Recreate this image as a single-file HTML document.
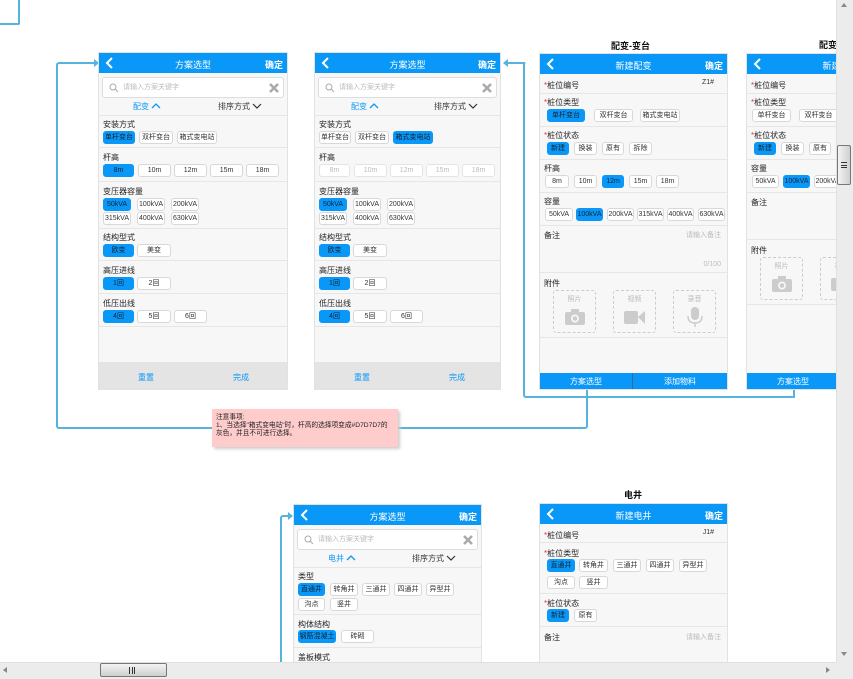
<!DOCTYPE html>
<html style="overflow:hidden;width:853px;height:679px"><head><meta charset="utf-8">
<style>
*{box-sizing:border-box;margin:0;padding:0}
body{width:853px;height:679px;overflow:hidden;background:#fff;position:relative;font-family:"Liberation Sans","Noto Sans CJK SC",sans-serif;font-size:8px;color:#333}
.a{position:absolute}
.p{position:absolute;background:#f7f7f7;border:1px solid #e2e2e2;overflow:hidden}
.hd{position:absolute;left:0;top:0;right:0;height:20px;background:#0a98f8;color:#fff}
.hd .t{position:absolute;left:0;right:0;top:5px;text-align:center;font-size:9px}
.hd .ok{position:absolute;right:4px;top:5px;font-size:9px;font-weight:bold}
.hd svg{position:absolute;left:6px;top:3px}
.l{position:absolute;left:4px;font-size:8px;color:#222}
.ln{position:absolute;left:0;right:0;height:1px;background:#e6e6e6}
.b{position:absolute;height:13px;border:1px solid #d8d8d8;border-radius:3px;background:#fff;font-size:7px;line-height:11px;text-align:center;color:#333;white-space:nowrap}
.on{background:#0a98f8;border-color:#0a98f8;color:#123}
.dis{color:#bbb;border-color:#e4e4e4}
.sr{position:absolute;left:3px;right:3px;height:21px;background:#fff;border:1px solid #ddd;border-radius:3px;color:#bbb;font-size:7px;line-height:19px;padding-left:20px}
.tab{position:absolute;font-size:8px}
.red{color:#e33}
.ttl{position:absolute;font-size:9px;font-weight:bold;color:#111}
.box{position:absolute;width:43px;height:43px;border:1px dashed #ccc;border-radius:3px;text-align:center;color:#bbb;font-size:7px;padding-top:3px}
.cn{position:absolute;border-color:#55b4dd;border-style:solid;border-width:0}
</style></head><body>

<div class="cn" style="left:0;top:0;width:20px;height:25px;border-right-width:2px;border-bottom-width:2px;border-bottom-right-radius:2px"></div>

<!-- connectors -->
<div class="cn" style="left:56px;top:62px;width:38px;height:20px;border-left-width:2px;border-top-width:2px;border-radius:3px 0 0 0"></div>
<div class="cn" style="left:56px;top:80px;width:156px;height:349px;border-left-width:2px;border-bottom-width:2px;border-radius:0 0 0 3px"></div>
<div class="a" style="left:94px;top:59px;width:0;height:0;border-left:5px solid #55b4dd;border-top:4px solid transparent;border-bottom:4px solid transparent"></div>
<div class="cn" style="left:398px;top:389px;width:190px;height:40px;border-right-width:2px;border-bottom-width:2px;border-radius:0 0 3px 0"></div>
<div class="cn" style="left:523px;top:62px;width:272px;height:336px;border-left-width:2px;border-bottom-width:2px;border-radius:3px 0 3px 3px"></div>
<div class="cn" style="left:508px;top:62px;width:17px;height:2px;border-top-width:2px"></div>
<div class="a" style="left:503px;top:59px;width:0;height:0;border-right:5px solid #55b4dd;border-top:4px solid transparent;border-bottom:4px solid transparent"></div>
<div class="cn" style="left:793px;top:389px;width:2px;height:9px;border-left-width:2px"></div>
<div class="cn" style="left:280px;top:515px;width:10px;height:147px;border-left-width:2px;border-top-width:2px;border-radius:3px 0 0 0"></div>
<div class="a" style="left:288px;top:512px;width:0;height:0;border-left:5px solid #55b4dd;border-top:4px solid transparent;border-bottom:4px solid transparent"></div>

<!-- note -->
<div class="a" style="left:212px;top:409px;width:186px;height:38px;background:#ffcccc;box-shadow:2px 2px 3px #ccc;font-size:6.7px;line-height:8px;color:#222;padding:5px 4px">注意事项:<br>1、当选择"箱式变电站"时，杆高的选择项变成#D7D7D7的灰色，并且不可进行选择。</div>

<!-- PANEL 1 -->
<div class="p" style="left:98px;top:52px;width:190px;height:338px">
 <div class="hd"><svg width="10" height="14"><polyline points="7,2 2,7 7,12" fill="none" stroke="#fff" stroke-width="2"/></svg><div class="t">方案选型</div><div class="ok">确定</div></div>
 <div class="sr" style="top:24px">请输入方案关键字<svg class="a" style="left:6px;top:5px" width="10" height="10"><circle cx="4" cy="4" r="3" fill="none" stroke="#aaa"/><line x1="6" y1="6" x2="9" y2="9" stroke="#aaa"/></svg><svg class="a" style="right:4px;top:5px" width="10" height="10"><path d="M1 1L9 9M9 1L1 9" stroke="#aaa" stroke-width="2.5"/></svg></div>
 <div class="tab" style="left:34px;top:48px;color:#0a98f8">配变 <svg width="10" height="6"><polyline points="1,5 5,1 9,5" fill="none" stroke="#0a98f8" stroke-width="1.3"/></svg></div>
 <div class="tab" style="left:119px;top:48px">排序方式 <svg width="10" height="6"><polyline points="1,1 5,5 9,1" fill="none" stroke="#333" stroke-width="1.2"/></svg></div>
 <div class="ln" style="top:62px"></div>
 <div class="l" style="top:66px">安装方式</div>
 <span class="b on" style="left:4px;top:78px;width:32px">单杆变台</span><span class="b" style="left:40px;top:78px;width:34px">双杆变台</span><span class="b" style="left:78px;top:78px;width:40px">箱式变电站</span>
 <div class="ln" style="top:94px"></div>
 <div class="l" style="top:99px">杆高</div>
 <span class="b on" style="left:4px;top:111px;width:31px">8m</span><span class="b" style="left:39px;top:111px;width:33px">10m</span><span class="b" style="left:75px;top:111px;width:33px">12m</span><span class="b" style="left:111px;top:111px;width:33px">15m</span><span class="b" style="left:147px;top:111px;width:33px">18m</span>
 <div class="ln" style="top:128px"></div>
 <div class="l" style="top:133px">变压器容量</div>
 <span class="b on" style="left:4px;top:145px;width:28px">50kVA</span><span class="b" style="left:38px;top:145px;width:28px">100kVA</span><span class="b" style="left:72px;top:145px;width:28px">200kVA</span>
 <span class="b" style="left:4px;top:159px;width:28px">315kVA</span><span class="b" style="left:38px;top:159px;width:28px">400kVA</span><span class="b" style="left:72px;top:159px;width:28px">630kVA</span>
 <div class="ln" style="top:175px"></div>
 <div class="l" style="top:179px">结构型式</div>
 <span class="b on" style="left:4px;top:191px;width:31px">欧变</span><span class="b" style="left:38px;top:191px;width:34px">美变</span>
 <div class="ln" style="top:207px"></div>
 <div class="l" style="top:212px">高压进线</div>
 <span class="b on" style="left:4px;top:224px;width:31px">1回</span><span class="b" style="left:38px;top:224px;width:34px">2回</span>
 <div class="ln" style="top:240px"></div>
 <div class="l" style="top:245px">低压出线</div>
 <span class="b on" style="left:4px;top:257px;width:31px">4回</span><span class="b" style="left:38px;top:257px;width:34px">5回</span><span class="b" style="left:75px;top:257px;width:33px">6回</span>
 <div class="ln" style="top:273px"></div>
 <div class="a" style="left:0;right:0;top:309px;height:28px;background:#e4e4e4;color:#0a98f8;font-size:8px"><span class="a" style="left:39px;top:10px">重置</span><span class="a" style="left:134px;top:10px">完成</span></div>
</div>

<!-- PANEL 2 -->
<div class="p" style="left:314px;top:52px;width:187px;height:338px">
 <div class="hd"><svg width="10" height="14"><polyline points="7,2 2,7 7,12" fill="none" stroke="#fff" stroke-width="2"/></svg><div class="t">方案选型</div><div class="ok">确定</div></div>
 <div class="sr" style="top:24px">请输入方案关键字<svg class="a" style="left:6px;top:5px" width="10" height="10"><circle cx="4" cy="4" r="3" fill="none" stroke="#aaa"/><line x1="6" y1="6" x2="9" y2="9" stroke="#aaa"/></svg><svg class="a" style="right:4px;top:5px" width="10" height="10"><path d="M1 1L9 9M9 1L1 9" stroke="#aaa" stroke-width="2.5"/></svg></div>
 <div class="tab" style="left:36px;top:48px;color:#0a98f8">配变 <svg width="10" height="6"><polyline points="1,5 5,1 9,5" fill="none" stroke="#0a98f8" stroke-width="1.3"/></svg></div>
 <div class="tab" style="left:119px;top:48px">排序方式 <svg width="10" height="6"><polyline points="1,1 5,5 9,1" fill="none" stroke="#333" stroke-width="1.2"/></svg></div>
 <div class="ln" style="top:62px"></div>
 <div class="l" style="top:66px">安装方式</div>
 <span class="b" style="left:4px;top:78px;width:32px">单杆变台</span><span class="b" style="left:40px;top:78px;width:34px">双杆变台</span><span class="b on" style="left:78px;top:78px;width:40px">箱式变电站</span>
 <div class="ln" style="top:94px"></div>
 <div class="l" style="top:99px">杆高</div>
 <span class="b dis" style="left:4px;top:111px;width:31px">8m</span><span class="b dis" style="left:39px;top:111px;width:33px">10m</span><span class="b dis" style="left:75px;top:111px;width:33px">12m</span><span class="b dis" style="left:111px;top:111px;width:33px">15m</span><span class="b dis" style="left:147px;top:111px;width:33px">18m</span>
 <div class="ln" style="top:128px"></div>
 <div class="l" style="top:133px">变压器容量</div>
 <span class="b on" style="left:4px;top:145px;width:28px">50kVA</span><span class="b" style="left:38px;top:145px;width:28px">100kVA</span><span class="b" style="left:72px;top:145px;width:28px">200kVA</span>
 <span class="b" style="left:4px;top:159px;width:28px">315kVA</span><span class="b" style="left:38px;top:159px;width:28px">400kVA</span><span class="b" style="left:72px;top:159px;width:28px">630kVA</span>
 <div class="ln" style="top:175px"></div>
 <div class="l" style="top:179px">结构型式</div>
 <span class="b on" style="left:4px;top:191px;width:31px">欧变</span><span class="b" style="left:38px;top:191px;width:34px">美变</span>
 <div class="ln" style="top:207px"></div>
 <div class="l" style="top:212px">高压进线</div>
 <span class="b on" style="left:4px;top:224px;width:31px">1回</span><span class="b" style="left:38px;top:224px;width:34px">2回</span>
 <div class="ln" style="top:240px"></div>
 <div class="l" style="top:245px">低压出线</div>
 <span class="b on" style="left:4px;top:257px;width:31px">4回</span><span class="b" style="left:38px;top:257px;width:34px">5回</span><span class="b" style="left:75px;top:257px;width:33px">6回</span>
 <div class="ln" style="top:273px"></div>
 <div class="a" style="left:0;right:0;top:309px;height:28px;background:#e4e4e4;color:#0a98f8;font-size:8px"><span class="a" style="left:39px;top:10px">重置</span><span class="a" style="left:134px;top:10px">完成</span></div>
</div>

<!-- PANEL 3 -->
<div class="ttl" style="left:611px;top:39px">配变-变台</div>
<div class="p" style="left:539px;top:53px;width:189px;height:337px">
 <div class="hd"><svg width="10" height="14"><polyline points="7,2 2,7 7,12" fill="none" stroke="#fff" stroke-width="2"/></svg><div class="t">新建配变</div><div class="ok">确定</div></div>
 <div class="l" style="top:26px"><span class="red">*</span>桩位编号</div><div class="a" style="right:13px;top:25px;font-size:7px">Z1#</div>
 <div class="ln" style="top:39px"></div>
 <div class="l" style="top:43px"><span class="red">*</span>桩位类型</div>
 <span class="b on" style="left:7px;top:55px;width:38px">单杆变台</span><span class="b" style="left:54px;top:55px;width:39px">双杆变台</span><span class="b" style="left:100px;top:55px;width:40px">箱式变电站</span>
 <div class="ln" style="top:72px"></div>
 <div class="l" style="top:76px"><span class="red">*</span>桩位状态</div>
 <span class="b on" style="left:7px;top:88px;width:22px">新建</span><span class="b" style="left:34px;top:88px;width:23px">换装</span><span class="b" style="left:62px;top:88px;width:22px">原有</span><span class="b" style="left:89px;top:88px;width:23px">拆除</span>
 <div class="ln" style="top:105px"></div>
 <div class="l" style="top:109px">杆高</div>
 <span class="b" style="left:5px;top:121px;width:24px">8m</span><span class="b" style="left:34px;top:121px;width:23px">10m</span><span class="b on" style="left:62px;top:121px;width:22px">12m</span><span class="b" style="left:89px;top:121px;width:23px">15m</span><span class="b" style="left:116px;top:121px;width:23px">18m</span>
 <div class="ln" style="top:138px"></div>
 <div class="l" style="top:142px">容量</div>
 <span class="b" style="left:5px;top:154px;width:28px">50kVA</span><span class="b on" style="left:36px;top:154px;width:27px">100kVA</span><span class="b" style="left:67px;top:154px;width:27px">200kVA</span><span class="b" style="left:97px;top:154px;width:27px">315kVA</span><span class="b" style="left:127px;top:154px;width:27px">400kVA</span><span class="b" style="left:158px;top:154px;width:27px">630kVA</span>
 <div class="ln" style="top:171px"></div>
 <div class="l" style="top:176px">备注</div><div class="a" style="right:6px;top:176px;color:#bbb;font-size:7px">请输入备注</div>
 <div class="a" style="right:6px;top:207px;color:#bbb;font-size:7px">0/100</div>
 <div class="ln" style="top:218px"></div>
 <div class="l" style="top:224px">附件</div>
 <div class="box" style="left:13px;top:236px">照片<br><svg width="22" height="18" style="margin-top:4px"><rect x="1" y="4" width="20" height="13" rx="2" fill="#ccc"/><rect x="7" y="1" width="8" height="4" fill="#ccc"/><circle cx="11" cy="10.5" r="4" fill="#f7f7f7"/><circle cx="11" cy="10.5" r="2.3" fill="#ccc"/></svg></div>
 <div class="box" style="left:73px;top:236px">视频<br><svg width="22" height="18" style="margin-top:4px"><rect x="0" y="3" width="14" height="13" rx="2" fill="#ccc"/><polygon points="14,9 21,3 21,16" fill="#ccc"/></svg></div>
 <div class="box" style="left:133px;top:236px">录音<br><svg width="22" height="22" style="margin-top:2px"><rect x="7" y="1" width="8" height="13" rx="4" fill="#ccc"/><path d="M4 10Q4 17 11 17Q18 17 18 10" fill="none" stroke="#ccc" stroke-width="1.5"/><line x1="11" y1="17" x2="11" y2="21" stroke="#ccc" stroke-width="1.5"/></svg></div>
 <div class="ln" style="top:283px"></div>
 <div class="a" style="left:0;right:0;top:319px;height:17px;background:#0a98f8;color:#fff;font-size:8px"><span class="a" style="left:30px;top:3px">方案选型</span><span class="a" style="left:92px;top:0;width:1px;height:17px;background:#3a6a90"></span><span class="a" style="left:124px;top:3px">添加物料</span></div>
</div>

<!-- PANEL 4 (clipped) -->
<div class="ttl" style="left:819px;top:38px">配变</div>
<div class="p" style="left:746px;top:53px;width:189px;height:337px">
 <div class="hd"><svg width="10" height="14"><polyline points="7,2 2,7 7,12" fill="none" stroke="#fff" stroke-width="2"/></svg><div class="t">新建配变</div></div>
 <div class="l" style="top:26px"><span class="red">*</span>桩位编号</div>
 <div class="ln" style="top:39px"></div>
 <div class="l" style="top:43px"><span class="red">*</span>桩位类型</div>
 <span class="b" style="left:5px;top:55px;width:39px">单杆变台</span><span class="b" style="left:52px;top:55px;width:39px">双杆变台</span>
 <div class="ln" style="top:72px"></div>
 <div class="l" style="top:76px"><span class="red">*</span>桩位状态</div>
 <span class="b on" style="left:7px;top:88px;width:22px">新建</span><span class="b" style="left:34px;top:88px;width:23px">换装</span><span class="b" style="left:62px;top:88px;width:22px">原有</span>
 <div class="ln" style="top:105px"></div>
 <div class="l" style="top:109px">容量</div>
 <span class="b" style="left:5px;top:121px;width:27px">50kVA</span><span class="b on" style="left:36px;top:121px;width:27px">100kVA</span><span class="b" style="left:67px;top:121px;width:27px">200kVA</span>
 <div class="ln" style="top:138px"></div>
 <div class="l" style="top:143px">备注</div>
 <div class="ln" style="top:185px"></div>
 <div class="l" style="top:191px">附件</div>
 <div class="box" style="left:13px;top:203px">照片<br><svg width="22" height="18" style="margin-top:4px"><rect x="1" y="4" width="20" height="13" rx="2" fill="#ccc"/><rect x="7" y="1" width="8" height="4" fill="#ccc"/><circle cx="11" cy="10.5" r="4" fill="#f7f7f7"/><circle cx="11" cy="10.5" r="2.3" fill="#ccc"/></svg></div>
 <div class="box" style="left:73px;top:203px">视频<br><svg width="22" height="18" style="margin-top:4px"><rect x="0" y="3" width="14" height="13" rx="2" fill="#ccc"/></svg></div>
 <div class="ln" style="top:250px"></div>
 <div class="a" style="left:0;right:0;top:319px;height:17px;background:#0a98f8;color:#fff;font-size:8px"><span class="a" style="left:30px;top:3px">方案选型</span></div>
</div>

<!-- PANEL 5 -->
<div class="p" style="left:293px;top:504px;width:189px;height:160px">
 <div class="hd"><svg width="10" height="14"><polyline points="7,2 2,7 7,12" fill="none" stroke="#fff" stroke-width="2"/></svg><div class="t">方案选型</div><div class="ok">确定</div></div>
 <div class="sr" style="top:24px">请输入方案关键字<svg class="a" style="left:6px;top:5px" width="10" height="10"><circle cx="4" cy="4" r="3" fill="none" stroke="#aaa"/><line x1="6" y1="6" x2="9" y2="9" stroke="#aaa"/></svg><svg class="a" style="right:4px;top:5px" width="10" height="10"><path d="M1 1L9 9M9 1L1 9" stroke="#aaa" stroke-width="2.5"/></svg></div>
 <div class="tab" style="left:34px;top:48px;color:#0a98f8">电井 <svg width="10" height="6"><polyline points="1,5 5,1 9,5" fill="none" stroke="#0a98f8" stroke-width="1.3"/></svg></div>
 <div class="tab" style="left:118px;top:48px">排序方式 <svg width="10" height="6"><polyline points="1,1 5,5 9,1" fill="none" stroke="#333" stroke-width="1.2"/></svg></div>
 <div class="ln" style="top:62px"></div>
 <div class="l" style="top:66px">类型</div>
 <span class="b on" style="left:4px;top:78px;width:27px">直通井</span><span class="b" style="left:36px;top:78px;width:28px">转角井</span><span class="b" style="left:68px;top:78px;width:28px">三通井</span><span class="b" style="left:100px;top:78px;width:28px">四通井</span><span class="b" style="left:132px;top:78px;width:28px">异型井</span>
 <span class="b" style="left:4px;top:93px;width:27px">沟点</span><span class="b" style="left:36px;top:93px;width:28px">竖井</span>
 <div class="ln" style="top:109px"></div>
 <div class="l" style="top:114px">构体结构</div>
 <span class="b on" style="left:4px;top:125px;width:38px">钢筋混凝土</span><span class="b" style="left:47px;top:125px;width:33px">砖砌</span>
 <div class="ln" style="top:142px"></div>
 <div class="l" style="top:147px">盖板模式</div>
</div>

<!-- PANEL 6 -->
<div class="ttl" style="left:624px;top:488px">电井</div>
<div class="p" style="left:539px;top:503px;width:189px;height:161px">
 <div class="hd"><svg width="10" height="14"><polyline points="7,2 2,7 7,12" fill="none" stroke="#fff" stroke-width="2"/></svg><div class="t">新建电井</div><div class="ok">确定</div></div>
 <div class="l" style="top:26px"><span class="red">*</span>桩位编号</div><div class="a" style="right:13px;top:25px;font-size:7px">J1#</div>
 <div class="ln" style="top:38px"></div>
 <div class="l" style="top:44px"><span class="red">*</span>桩位类型</div>
 <span class="b on" style="left:7px;top:55px;width:28px">直通井</span><span class="b" style="left:39px;top:55px;width:29px">转角井</span><span class="b" style="left:73px;top:55px;width:28px">三通井</span><span class="b" style="left:106px;top:55px;width:28px">四通井</span><span class="b" style="left:139px;top:55px;width:28px">异型井</span>
 <span class="b" style="left:7px;top:72px;width:28px">沟点</span><span class="b" style="left:39px;top:72px;width:29px">竖井</span>
 <div class="ln" style="top:89px"></div>
 <div class="l" style="top:94px"><span class="red">*</span>桩位状态</div>
 <span class="b on" style="left:7px;top:105px;width:22px">新建</span><span class="b" style="left:34px;top:105px;width:23px">原有</span>
 <div class="ln" style="top:122px"></div>
 <div class="l" style="top:128px">备注</div><div class="a" style="right:6px;top:128px;color:#bbb;font-size:7px">请输入备注</div>
</div>

<!-- scrollbars -->
<div class="a" style="left:836px;top:0;width:17px;height:662px;background:#ececec;border-left:1px solid #e0e0e0"></div>
<div class="a" style="left:841px;top:3px;width:0;height:0;border-bottom:4px solid #888;border-left:3px solid transparent;border-right:3px solid transparent"></div>
<div class="a" style="left:841px;top:652px;width:0;height:0;border-top:4px solid #888;border-left:3px solid transparent;border-right:3px solid transparent"></div>
<div class="a" style="left:837px;top:145px;width:14px;height:40px;background:linear-gradient(90deg,#f4f4f4,#cfcfcf);border:1px solid #777;border-radius:2px"><div class="a" style="left:3px;top:16px;width:6px;height:6px;border-top:1px solid #333;border-bottom:1px solid #333"></div><div class="a" style="left:3px;top:19px;width:6px;height:1px;background:#333"></div></div>
<div class="a" style="left:0;top:662px;width:836px;height:17px;background:#ececec;border-top:1px solid #e0e0e0"></div>
<div class="a" style="left:836px;top:662px;width:17px;height:17px;background:#ececec"></div>
<div class="a" style="left:3px;top:667px;width:0;height:0;border-right:4px solid #888;border-top:3px solid transparent;border-bottom:3px solid transparent"></div>
<div class="a" style="left:826px;top:667px;width:0;height:0;border-left:4px solid #888;border-top:3px solid transparent;border-bottom:3px solid transparent"></div>
<div class="a" style="left:100px;top:663px;width:67px;height:14px;background:linear-gradient(#f4f4f4,#cfcfcf);border:1px solid #777;border-radius:2px"><div class="a" style="left:28px;top:3px;width:6px;height:7px;border-left:1px solid #333;border-right:1px solid #333"></div><div class="a" style="left:31px;top:3px;width:1px;height:7px;background:#333"></div></div>
</body></html>
